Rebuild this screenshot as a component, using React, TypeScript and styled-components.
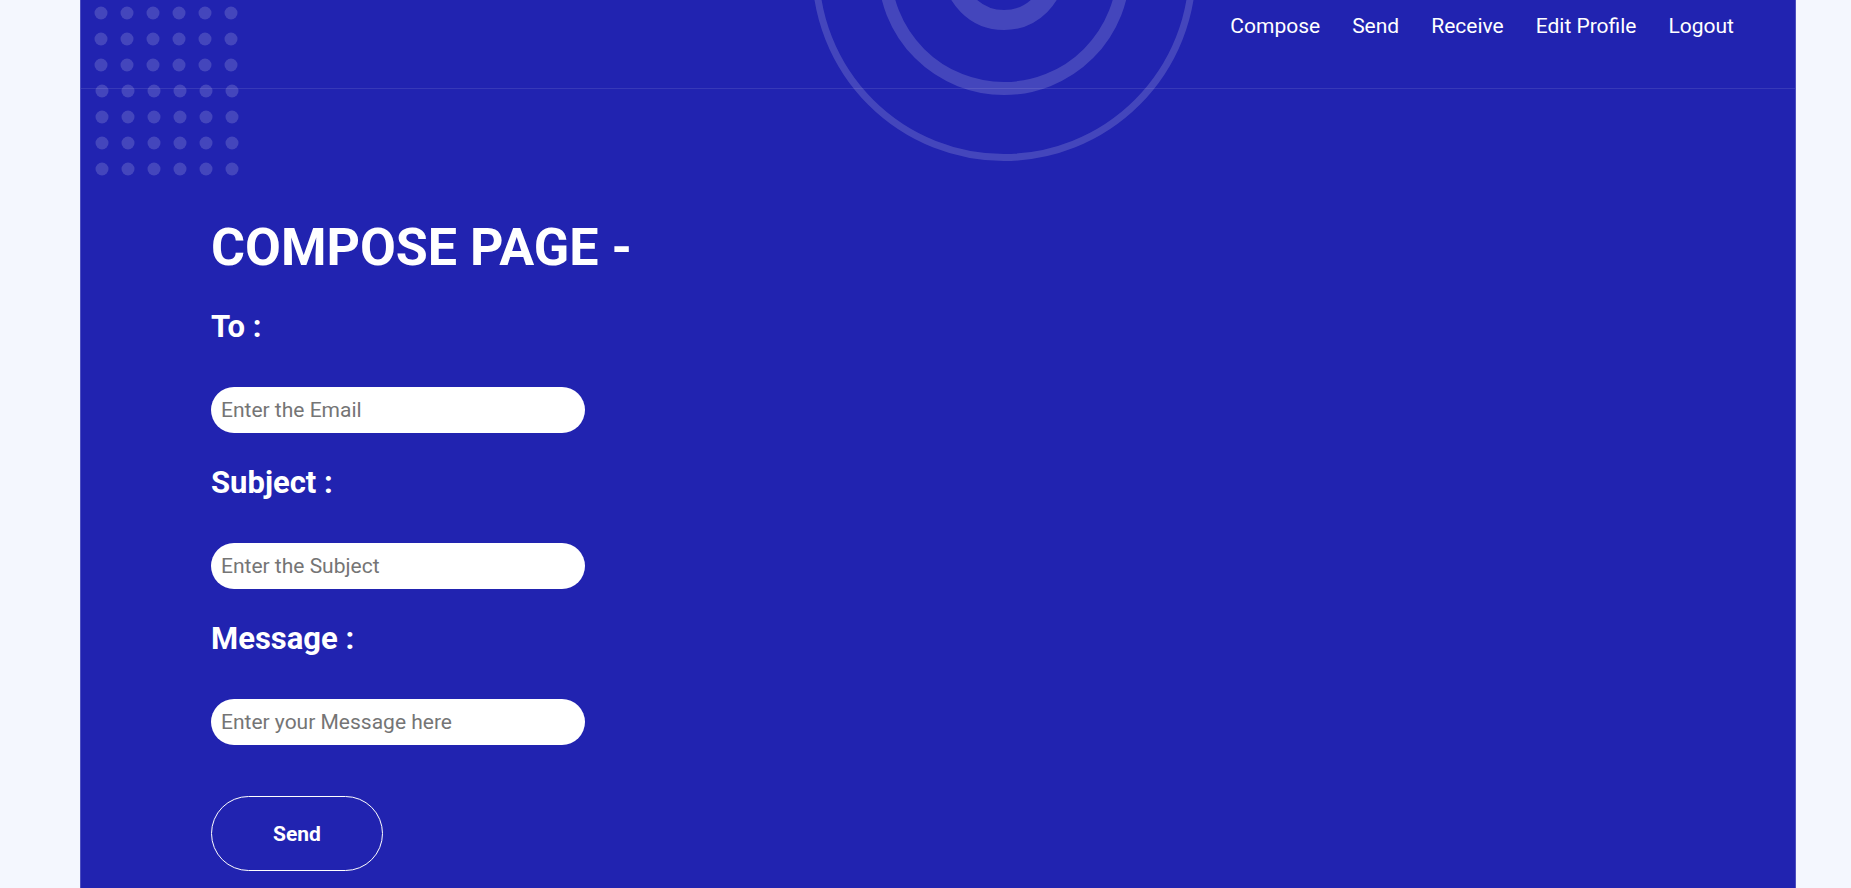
import React from "react";
import styled, { createGlobalStyle } from "styled-components";

const colors = {
  PAGE: "#f4f7fe",
  BLUE: "#2123b0",
  LINE: "rgba(255, 255, 255, 0.1)",
  SHAPE: "rgba(255, 255, 255, 0.16)",
  PLACEHOLDER: "#757575",
};

const GlobalStyle = createGlobalStyle`
  * {
    box-sizing: border-box;
  }
  body {
    margin: 0;
    background-color: ${colors.PAGE};
    font-family: Roboto, "Liberation Sans", Arial, sans-serif;
  }
`;

const navItems = ["Compose", "Send", "Receive", "Edit Profile", "Logout"];

const fields = [
  { label: "To :", placeholder: "Enter the Email", type: "email" },
  { label: "Subject :", placeholder: "Enter the Subject", type: "text" },
  { label: "Message :", placeholder: "Enter your Message here", type: "text" },
];

const Dots = () => (
  <DotsArt width="150" height="170" viewBox="0 0 150 170">
    {Array.from({ length: 7 }).map((_, row) =>
      Array.from({ length: 6 }).map((_, col) => (
        <circle
          key={`${row}-${col}`}
          cx={7 + col * 26 + (row > 2 ? 1 : 0)}
          cy={7 + row * 26}
          r="6.5"
          fill={colors.SHAPE}
        />
      ))
    )}
  </DotsArt>
);

const Rings = () => (
  <RingsArt width="400" height="170" viewBox="0 0 400 170">
    <circle cx="200" cy="-31" r="188.5" fill="none" stroke={colors.SHAPE} strokeWidth="7" />
    <circle cx="200" cy="-31" r="119.5" fill="none" stroke={colors.SHAPE} strokeWidth="13" />
    <circle cx="200" cy="-31" r="51" fill="none" stroke={colors.SHAPE} strokeWidth="20" />
  </RingsArt>
);

export default function App() {
  return (
    <>
      <GlobalStyle />
      <Page>
        <Dots />
        <Rings />
        <Header>
          <Nav>
            {navItems.map((item) => (
              <NavLink key={item} href="#">
                {item}
              </NavLink>
            ))}
          </Nav>
        </Header>
        <Main>
          <Title>COMPOSE PAGE -</Title>
          <Form onSubmit={(e) => e.preventDefault()}>
            {fields.map((field) => (
              <Field key={field.label}>
                <Label>{field.label}</Label>
                <Input type={field.type} placeholder={field.placeholder} />
              </Field>
            ))}
            <SendButton type="submit">Send</SendButton>
          </Form>
        </Main>
      </Page>
    </>
  );
}

const Page = styled.div`
  position: relative;
  width: 1716px;
  min-height: 4650px;
  margin-left: 80px;
  background-color: ${colors.BLUE};
  border-left: 1px solid rgba(255, 255, 255, 0.2);
  border-right: 1px solid rgba(255, 255, 255, 0.2);
  overflow: hidden;
`;

const DotsArt = styled.svg`
  position: absolute;
  left: 13px;
  top: 6px;
  pointer-events: none;
`;

const RingsArt = styled.svg`
  position: absolute;
  left: 723px;
  top: 0;
  pointer-events: none;
`;

const Header = styled.header`
  position: relative;
  display: flex;
  justify-content: flex-end;
  height: 89px;
  padding: 14px 61px 0 0;
  border-bottom: 1px solid ${colors.LINE};
`;

const Nav = styled.nav`
  display: flex;
  gap: 32px;
  height: 26px;
`;

const NavLink = styled.a`
  font-size: 21px;
  line-height: 1.2;
  color: white;
  text-decoration: none;
`;

const Main = styled.main`
  position: relative;
  padding: 128px 0 0 130px;
`;

const Title = styled.h1`
  margin: 0 0 30px;
  font-size: 52px;
  line-height: 1.2;
  font-weight: 700;
  color: white;
`;

const Form = styled.form`
  display: flex;
  flex-direction: column;
  align-items: flex-start;
  gap: 32px;
`;

const Field = styled.div`
  display: flex;
  flex-direction: column;
  align-items: flex-start;
  gap: 42px;
`;

const Label = styled.label`
  font-size: 31px;
  line-height: 36px;
  font-weight: 700;
  color: white;
`;

const Input = styled.input`
  width: 374px;
  height: 46px;
  padding: 0 10px;
  border: none;
  border-radius: 23px;
  background-color: white;
  font-family: Roboto, "Liberation Sans", Arial, sans-serif;
  font-size: 21px;
  color: #333;
  outline: none;

  &::placeholder {
    color: ${colors.PLACEHOLDER};
  }
`;

const SendButton = styled.button`
  width: 172px;
  height: 75px;
  margin-top: 19px;
  border: 1px solid white;
  border-radius: 38px;
  background: transparent;
  font-family: Roboto, "Liberation Sans", Arial, sans-serif;
  font-size: 21px;
  font-weight: 700;
  color: white;
  cursor: pointer;
`;
